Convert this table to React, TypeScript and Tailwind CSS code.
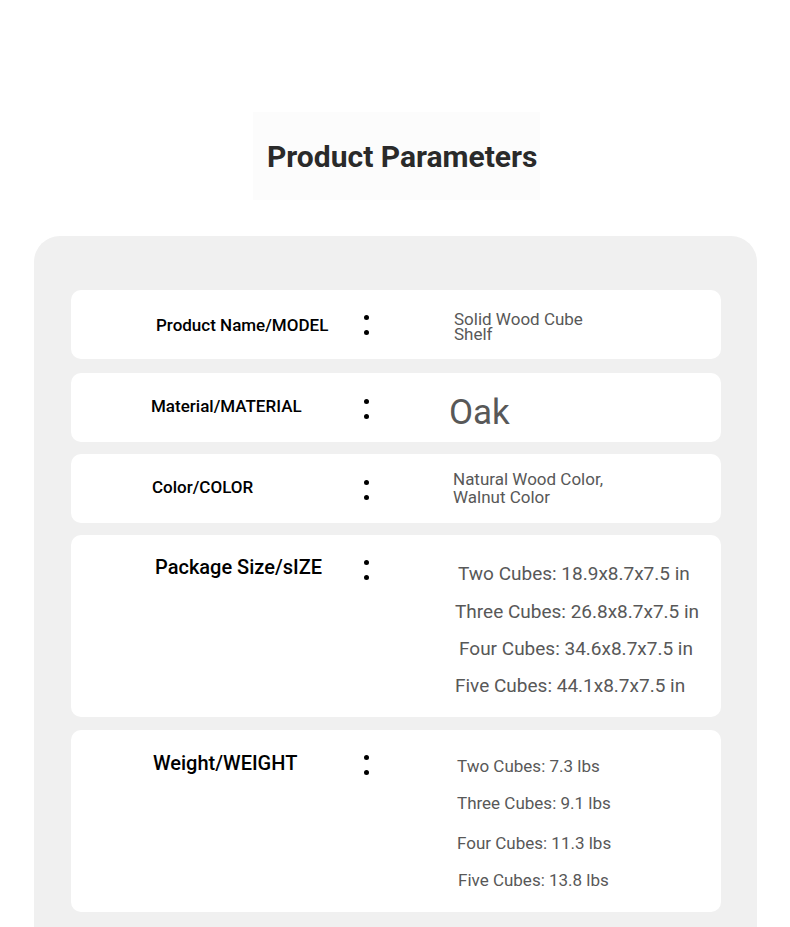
import React from "react"

interface Param {
    label: string,
    labelClass: string,
    colonClass: string,
    card: string,
    value: React.ReactNode,
}

function Colon({ className }: { className: string }) {
    return (
        <div className={`w-[90px] shrink-0 ${className}`}>
            <div className="flex flex-col gap-[10px] w-[5px]">
                <div className="w-[5px] h-[5px] rounded-full bg-black"></div>
                <div className="w-[5px] h-[5px] rounded-full bg-black"></div>
            </div>
        </div>
    )
}

const sizes = [
    { text: "Two Cubes: 18.9x8.7x7.5 in", pl: "pl-[3px]" },
    { text: "Three Cubes: 26.8x8.7x7.5 in", pl: "pl-0 mt-[1px]" },
    { text: "Four Cubes: 34.6x8.7x7.5 in", pl: "pl-[4px]" },
    { text: "Five Cubes: 44.1x8.7x7.5 in", pl: "pl-0" },
]

const weights = [
    { text: "Two Cubes: 7.3 lbs", cls: "h-[37px]" },
    { text: "Three Cubes: 9.1 lbs", cls: "h-[37px]" },
    { text: "Four Cubes: 11.3 lbs", cls: "h-[37px] mt-[3px]" },
    { text: "Five Cubes: 13.8 lbs", cls: "h-[37px] pl-[1px]" },
]

const params: Param[] = [
    {
        label: "Product Name/MODEL",
        labelClass: "pl-[85px] text-[17px]",
        colonClass: "",
        card: "h-[69px] items-center mt-0",
        value: <div className="pt-[4px] text-[17px] leading-[15px] text-[#585858]">Solid Wood Cube<br />Shelf</div>,
    },
    {
        label: "Material/MATERIAL",
        labelClass: "pl-[80px] text-[17px] pb-[4px]",
        colonClass: "pt-[2px]",
        card: "h-[69px] items-center mt-[14px]",
        value: <div className="-ml-[5px] text-[35px] leading-[40px] text-[#585858] pt-[10px]">Oak</div>,
    },
    {
        label: "Color/COLOR",
        labelClass: "pl-[81px] text-[17px] pb-[4px]",
        colonClass: "pt-[3px]",
        card: "h-[69px] items-center mt-[12px]",
        value: <div className="-ml-[1px] text-[17px] leading-[18px] text-[#585858] pb-[2px]">Natural Wood Color,<br />Walnut Color</div>,
    },
    {
        label: "Package Size/sIZE",
        labelClass: "pl-[84px] text-[20px] pt-[20px]",
        colonClass: "pt-[25px]",
        card: "items-start mt-[12px] pb-[12px]",
        value: (
            <div className="pt-[21px] text-[19px] text-[#585858] ml-[1px]">
                {sizes.map((s) => (
                    <div key={s.text} className={`h-[37px] flex items-center ${s.pl}`}>{s.text}</div>
                ))}
            </div>
        ),
    },
    {
        label: "Weight/WEIGHT",
        labelClass: "pl-[82px] text-[20px] pt-[21px]",
        colonClass: "pt-[25px]",
        card: "items-start mt-[13px] pb-[13px]",
        value: (
            <div className="pt-[18px] text-[17px] text-[#585858] ml-[3px]">
                {weights.map((w) => (
                    <div key={w.text} className={`flex items-center ${w.cls}`}>{w.text}</div>
                ))}
            </div>
        ),
    },
]

export default function App() {
    return (
        <div className="w-[790px] min-h-[927px] bg-white font-['Roboto',sans-serif]">
            <div className="pt-[112px]">
                <div className="ml-[253px] w-[287px] h-[88px] bg-[#fcfcfc] flex items-center pl-[14px]">
                    <h1 className="text-[30px] font-bold text-[#2a2a2a] leading-none pt-[2px] whitespace-nowrap">Product Parameters</h1>
                </div>
            </div>
            <div className="ml-[34px] mt-[36px] w-[723px] bg-[#f0f0f0] rounded-t-[26px] pt-[54px] pb-[40px] px-[37px]">
                {params.map((p) => (
                    <div key={p.label} className={`w-[650px] bg-white rounded-[10px] flex ${p.card}`}>
                        <div className={`w-[293px] shrink-0 font-medium text-black leading-[24px] ${p.labelClass}`}>{p.label}</div>
                        <Colon className={p.colonClass} />
                        <div>{p.value}</div>
                    </div>
                ))}
            </div>
        </div>
    )
}
